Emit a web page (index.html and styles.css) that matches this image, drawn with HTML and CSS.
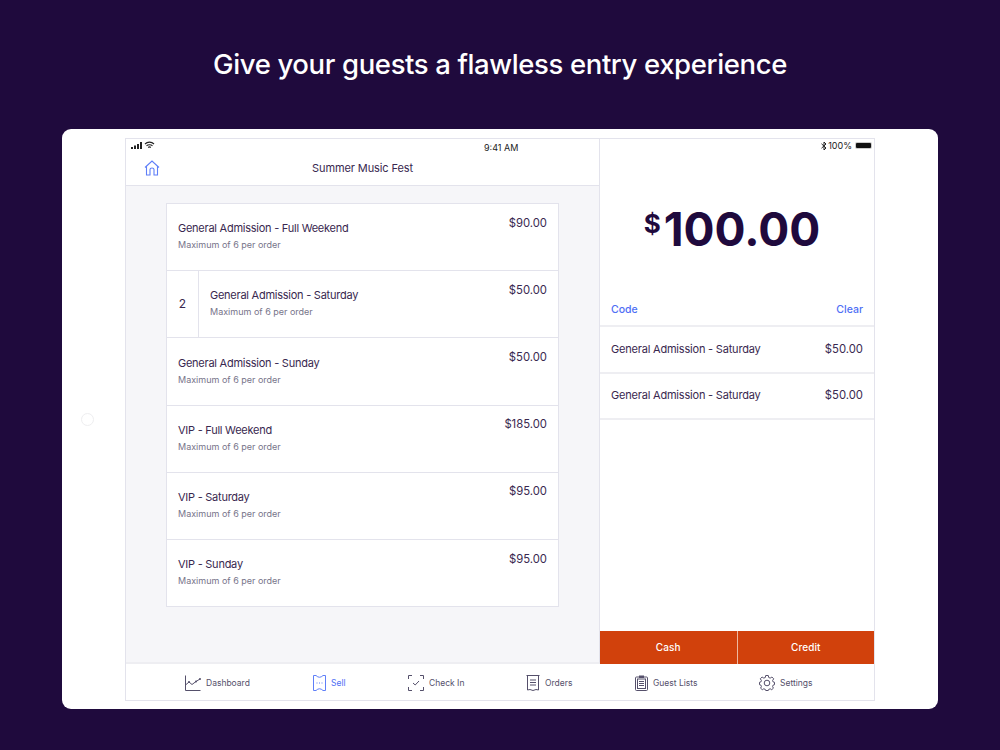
FILE: index.html
```html
<!DOCTYPE html>
<html lang="en">
  <head>
    <meta charset="UTF-8" />
    <title>Summer Music Fest</title>
    <link rel="stylesheet" href="styles.css">
  </head>
  <body>
    <h1 class="headline">Give your guests a flawless entry experience</h1>

    <div class="tablet">
      <span class="home-button"></span>
      <div class="screen">
        <div class="status">
          <span class="status-left">
            <svg width="24" height="8" viewBox="0 0 24 8">
              <rect x="0" y="6" width="2" height="2" fill="#222"/>
              <rect x="3" y="4.500" width="2" height="3.500" fill="#222"/>
              <rect x="6" y="3" width="2" height="5" fill="#222"/>
              <rect x="9" y="1" width="2" height="7" fill="#222"/>
              <path d="M14 3 C16.500 0.500 20.500 0.500 23 3 M15.500 4.800 C17 3.300 20 3.300 21.500 4.800 M17.200 6.500 C18 5.800 19 5.800 19.800 6.500" fill="none" stroke="#222" stroke-width="1.100"/>
            </svg>
          </span>
          <span class="status-time">9:41 AM</span>
          <span class="status-right">
            <svg width="6" height="10" viewBox="0 0 6 10">
              <path d="M0.500 2.800 L5 7 L3 9 V1 L5 3 L0.500 7.200" fill="none" stroke="#222" stroke-width="1"/>
            </svg>
            <span>100%</span>
            <span class="battery"><span class="battery-fill"></span></span>
          </span>
        </div>

        <div class="main">
          <section class="sell">
            <header class="sell-header">
              <svg class="home-icon" width="16" height="16" viewBox="0 0 16 16">
                <path d="M1 7.500 L8 1 L15 7.500 M2.500 6.500 V15 H6 V9.500 Q6 8 8 8 Q10 8 10 9.500 V15 H13.500 V6.500" fill="none" stroke="#5f7ff8" stroke-width="1.100"/>
              </svg>
              <span class="sell-title">Summer Music Fest</span>
            </header>
            <ul class="ticket-list">
              <li class="ticket">
                <div class="ticket-info">
                  <div class="ticket-name">General Admission - Full Weekend</div>
                  <div class="ticket-limit">Maximum of 6 per order</div>
                </div>
                <div class="ticket-price">$90.00</div>
              </li>
              <li class="ticket">
                <div class="ticket-qty">2</div>
                <div class="ticket-info">
                  <div class="ticket-name">General Admission - Saturday</div>
                  <div class="ticket-limit">Maximum of 6 per order</div>
                </div>
                <div class="ticket-price">$50.00</div>
              </li>
              <li class="ticket">
                <div class="ticket-info">
                  <div class="ticket-name">General Admission - Sunday</div>
                  <div class="ticket-limit">Maximum of 6 per order</div>
                </div>
                <div class="ticket-price">$50.00</div>
              </li>
              <li class="ticket">
                <div class="ticket-info">
                  <div class="ticket-name">VIP - Full Weekend</div>
                  <div class="ticket-limit">Maximum of 6 per order</div>
                </div>
                <div class="ticket-price">$185.00</div>
              </li>
              <li class="ticket">
                <div class="ticket-info">
                  <div class="ticket-name">VIP - Saturday</div>
                  <div class="ticket-limit">Maximum of 6 per order</div>
                </div>
                <div class="ticket-price">$95.00</div>
              </li>
              <li class="ticket">
                <div class="ticket-info">
                  <div class="ticket-name">VIP - Sunday</div>
                  <div class="ticket-limit">Maximum of 6 per order</div>
                </div>
                <div class="ticket-price">$95.00</div>
              </li>
            </ul>
          </section>

          <aside class="cart">
            <div class="total"><span class="total-sign">$</span>100.00</div>
            <div class="cart-actions">
              <span>Code</span>
              <span>Clear</span>
            </div>
            <div class="cart-row">
              <span>General Admission - Saturday</span>
              <span>$50.00</span>
            </div>
            <div class="cart-row">
              <span>General Admission - Saturday</span>
              <span>$50.00</span>
            </div>
            <div class="pay">
              <div class="pay-button">Cash</div>
              <div class="pay-button">Credit</div>
            </div>
          </aside>
        </div>

        <nav class="tabs">
          <span class="tab tab-dashboard">
            <svg width="16" height="16" viewBox="0 0 16 16">
              <path d="M0.500 0.500 V15.500 H15.500 M0.500 10 L4 7 L7 9.500 L11 6.500 L15 4" fill="none" stroke="#55506b" stroke-width="1"/>
              <circle cx="4" cy="7" r="1" fill="#55506b"/>
              <circle cx="11" cy="6.500" r="1" fill="#55506b"/>
              <circle cx="15" cy="4" r="1" fill="#55506b"/>
            </svg>
            Dashboard
          </span>
          <span class="tab tab-sell active">
            <svg width="13" height="16" viewBox="0 0 13 16">
              <path d="M0.500 0.500 H3 Q6.500 4 10 0.500 H12.500 V15.500 H10 Q6.500 12 3 15.500 H0.500 Z" fill="none" stroke="#5f7ff8" stroke-width="1"/>
              <path d="M3.500 8 H9.500" stroke="#5f7ff8" stroke-width="1" stroke-dasharray="1 1.500"/>
            </svg>
            Sell
          </span>
          <span class="tab tab-checkin">
            <svg width="16" height="16" viewBox="0 0 16 16">
              <path d="M0.500 4 V0.500 H4 M12 0.500 H15.500 V4 M15.500 12 V15.500 H12 M4 15.500 H0.500 V12" fill="none" stroke="#55506b" stroke-width="1"/>
              <path d="M5 8 L7.200 10 L11 6" fill="none" stroke="#55506b" stroke-width="1"/>
            </svg>
            Check In
          </span>
          <span class="tab tab-orders">
            <svg width="14" height="16" viewBox="0 0 14 16">
              <path d="M0.500 0.500 H13.500 M1.500 0.500 V15 L4 14.500 L7 15.500 L10 14.500 L12.500 15 V0.500" fill="none" stroke="#55506b" stroke-width="1"/>
              <path d="M4 5 H10 M4 7.500 H10 M4 10 H10" stroke="#55506b" stroke-width="1"/>
            </svg>
            Orders
          </span>
          <span class="tab tab-guests">
            <svg width="13" height="16" viewBox="0 0 13 16">
              <rect x="0.500" y="2" width="12" height="13.500" rx="1" fill="none" stroke="#55506b" stroke-width="1"/>
              <rect x="2.500" y="4" width="8" height="9.500" fill="none" stroke="#55506b" stroke-width="1"/>
              <rect x="4" y="0.500" width="5" height="2.500" fill="#55506b"/>
              <path d="M4 6.500 H9 M4 8.500 H9 M4 10.500 H9" stroke="#55506b" stroke-width="1"/>
            </svg>
            Guest Lists
          </span>
          <span class="tab tab-settings">
            <svg width="16" height="16" viewBox="0 0 16 16">
              <circle cx="8" cy="8" r="2.800" fill="none" stroke="#55506b" stroke-width="1"/>
              <path d="M6.700 0.500 H9.300 L9.700 2.500 L11.200 3.100 L12.900 2 L14.700 3.800 L13.600 5.500 L14.200 7 L15.500 7.300 V9.700 L14.200 10 L13.600 11.500 L14.400 13.200 L12.700 14.700 L11.200 13.800 L9.700 14.400 L9.300 15.500 H6.700 L6.300 14.400 L4.800 13.800 L3.300 14.700 L1.600 13.200 L2.400 11.500 L1.800 10 L0.500 9.700 V7.300 L1.800 7 L2.400 5.500 L1.300 3.800 L3.100 2 L4.800 3.100 L6.300 2.500 Z" fill="none" stroke="#55506b" stroke-width="1"/>
            </svg>
            Settings
          </span>
        </nav>
      </div>
    </div>
  </body>
</html>
```

FILE: styles.css
```css
* {
  box-sizing: border-box;
}

body {
  margin: 0;
  height: 750px;
  overflow: hidden;
  background-color: #1f0a3d;
  font-family: "Inter", "Liberation Sans", sans-serif;
  color: #39284f;
}

.headline {
  margin: 0;
  height: 129px;
  line-height: 128px;
  text-align: center;
  font-size: 27.500px;
  font-weight: 500;
  letter-spacing: -0.37px;
  color: #fff;
}

.tablet {
  position: relative;
  margin: 0 62px;
  height: 580px;
  padding: 9px 63px 8px 63px;
  background-color: #fff;
  border-radius: 9px;
}

.home-button {
  position: absolute;
  left: 19px;
  top: 284px;
  width: 13px;
  height: 13px;
  border: 1px solid #eeeef0;
  border-radius: 50%;
}

.screen {
  position: relative;
  display: flex;
  flex-direction: column;
  height: 563px;
  border: 1px solid #e3e3ec;
}

.status {
  position: absolute;
  z-index: 2;
  top: 0;
  left: 0;
  right: 0;
  height: 16px;
  font-size: 9px;
  color: #222;
}

.status-left {
  position: absolute;
  left: 5px;
  top: 1px;
}

.status-time {
  position: absolute;
  left: 358px;
  top: 3px;
}

.status-right {
  position: absolute;
  right: 2px;
  top: 1px;
  display: flex;
  align-items: center;
  gap: 1px;
}

.battery {
  display: inline-block;
  width: 17px;
  height: 7px;
  margin-left: 2px;
  padding: 1px;
  background-color: #ccc;
  border-radius: 2px;
}

.battery-fill {
  display: block;
  height: 100%;
  background-color: #111;
  border-radius: 1px;
}

.main {
  display: flex;
  flex: 1;
  min-height: 0;
}

.sell {
  width: 474px;
  background-color: #f6f6f9;
  border-right: 1px solid #e3e3ec;
  border-bottom: 2px solid #eeeef2;
}

.sell-header {
  position: relative;
  height: 47px;
  padding-top: 17px;
  background-color: #fff;
  border-bottom: 1px solid #e3e3ec;
  text-align: center;
  font-size: 11px;
  letter-spacing: -0.1px;
  line-height: 24px;
}

.home-icon {
  position: absolute;
  left: 18px;
  top: 21px;
}

.ticket-list {
  list-style: none;
  width: 393px;
  margin: 17px 0 0 40px;
  padding: 0;
  background-color: #fff;
  border: 1px solid #e3e3ec;
}

.ticket {
  display: flex;
  height: 67.200px;
  border-bottom: 1px solid #e3e3ec;
}

.ticket:last-child {
  height: 66px;
  border-bottom: 0;
}

.ticket-qty {
  width: 32px;
  border-right: 1px solid #e3e3ec;
  text-align: center;
  font-size: 12px;
  line-height: 65px;
}

.ticket-info {
  flex: 1;
  padding: 16.300px 0 0 11px;
}

.ticket-name {
  font-size: 11px;
  letter-spacing: -0.25px;
  line-height: 16px;
}

.ticket-limit {
  margin-top: 2px;
  font-size: 9px;
  line-height: 14px;
  color: #77748a;
}

.ticket-price {
  padding: 10.600px 11px 0 0;
  font-size: 11.300px;
  line-height: 16px;
}

.cart {
  display: flex;
  flex-direction: column;
  flex: 1;
}

.total {
  height: 146px;
  padding: 57px 10px 0 0;
  text-align: center;
  font-size: 46px;
  line-height: 66px;
  font-weight: 700;
  color: #1f0a3d;
}

.total-sign {
  position: relative;
  top: -13px;
  margin-right: 3px;
  font-size: 26px;
}

.cart-actions {
  display: flex;
  justify-content: space-between;
  height: 42px;
  padding: 17px 11px 0 11px;
  font-size: 10.500px;
  line-height: 16px;
  font-weight: 500;
  color: #4f6ff5;
  border-bottom: 2px solid #eeeef2;
}

.cart-row {
  display: flex;
  justify-content: space-between;
  align-items: center;
  height: 46.500px;
  padding: 0 11px 1px 11px;
  font-size: 11.300px;
  border-bottom: 2px solid #eeeef2;
}

.cart-row span:first-child {
  font-size: 11px;
  letter-spacing: -0.2px;
}

.pay {
  display: flex;
  margin-top: auto;
  height: 33px;
}

.pay-button {
  flex: 1;
  background-color: #d1410c;
  color: #fff;
  text-align: center;
  font-size: 10px;
  font-weight: 500;
  line-height: 33px;
  letter-spacing: 0.1px;
}

.pay-button:first-child {
  border-right: 1px solid #eeb8a0;
}

.tabs {
  position: relative;
  height: 36px;
}

.tab {
  position: absolute;
  top: 11px;
  display: flex;
  align-items: center;
  gap: 5px;
  font-size: 8.500px;
  color: #55506b;
}

.tab-dashboard { left: 59px; }
.tab-sell { left: 187px; }
.tab-checkin { left: 282px; }
.tab-orders { left: 400px; }
.tab-guests { left: 509px; }
.tab-settings { left: 633px; }

.tab.active {
  color: #4f6ff5;
}
```
